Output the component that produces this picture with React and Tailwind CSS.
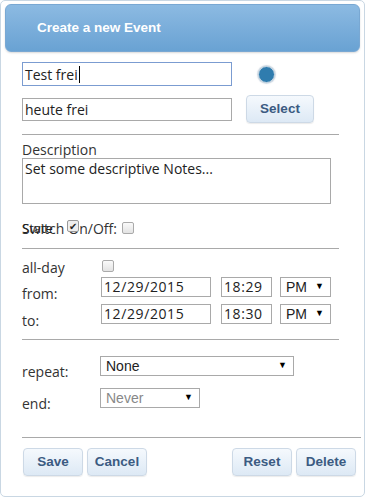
import React from "react";

const btn =
  "h-[28px] rounded-[4px] border border-[#cdd9e6] bg-gradient-to-b from-[#f5f9fd] to-[#dde9f5] text-[13.5px] font-bold text-[#3b5b82] shadow-[0_1px_1px_rgba(0,0,0,0.08)] [font-family:'Liberation_Sans',sans-serif] flex items-center justify-center";

const inp =
  "border border-[#a9a9a9] bg-white text-[14px] text-[#222] px-[2px] outline-none [font-family:'Open_Sans',sans-serif]";

function Sel({ w, value, gray }) {
  return (
    <div
      className={`h-[20px] border border-[#a9a9a9] bg-white flex items-center justify-between pl-[5px] pr-[6px] text-[14px] [font-family:'Liberation_Sans',sans-serif] ${gray ? "text-[#888]" : "text-[#222]"}`}
      style={{ width: w }}
    >
      <span>{value}</span>
      <span className="text-[9px] text-black">▼</span>
    </div>
  );
}

export default function App() {
  return (
    <div className="w-[368px] h-[500px] bg-white [font-family:'Open_Sans',sans-serif] text-[#333]">
      <div className="w-[365px] h-[497px] border border-[#c9d7e3] rounded-[5px] pt-[3px] px-[4px] flex flex-col">
        <div className="h-[48px] rounded-[6px] border border-[#79a8d3] bg-gradient-to-b from-[#8cbae2] to-[#69a2d3] flex items-center pl-[31px] shadow-[0_1px_2px_rgba(0,0,0,0.15)]">
          <span className="text-white font-bold text-[13.5px] [font-family:'Liberation_Sans',sans-serif]">
            Create a new Event
          </span>
        </div>

        <div className="pl-[17px] flex flex-col">
          <div className="mt-[10px] flex items-center">
            <div className="w-[210px] h-[24px] border border-[#7b9cd1] flex items-center px-[2px] text-[14px] text-[#222]">
              Test frei<span className="inline-block w-[1px] h-[17px] bg-black ml-[1px]" />
            </div>
            <div className="ml-[26px] w-[17px] h-[17px] rounded-full bg-[#2f7cae] border border-[#c8d8e4] shadow-[0_0_1px_1px_rgba(160,180,200,0.5)]" />
          </div>

          <div className="mt-[9px] flex items-center">
            <div className={`${inp} w-[210px] h-[23px] flex items-center`}>heute frei</div>
            <div className={`${btn} ml-[14px] w-[68px]`}>Select</div>
          </div>

          <div className="mt-[11px] w-[317px] h-[1px] bg-[#a9a9a9]" />

          <div className="mt-[6px] text-[14px] leading-[17px] text-[#333]">Description</div>
          <div className={`${inp} w-[309px] h-[46px] leading-[18px] pt-[1px]`}>Set some descriptive Notes...</div>

          <div className="mt-[16px] flex items-center text-[14px] h-[16px] relative">
            <span className="absolute left-0 top-[-1px] text-[13px] text-[#222]">State</span>
            <span>Switch</span>
            <span className="ml-[4px] relative">
              On/Off:
              <span className="absolute left-[-1px] top-[2px] w-[12px] h-[12px] rounded-[2px] border border-[#999] bg-[#eee] flex items-center justify-center text-[10px] leading-none text-[#222]">✔</span>
            </span>
            <span className="ml-[5px] w-[12px] h-[12px] rounded-[2px] border border-[#aaa] bg-gradient-to-b from-[#fafafa] to-[#e3e3e3]" />
          </div>

          <div className="mt-[12px] w-[317px] h-[1px] bg-[#a9a9a9]" />

          <div className="mt-[10px] flex items-center h-[13px]">
            <span className="w-[80px] text-[14px] pt-[3px]">all-day</span>
            <span className="w-[12px] h-[12px] rounded-[2px] border border-[#aaa] bg-gradient-to-b from-[#fafafa] to-[#e3e3e3]" />
          </div>

          <div className="mt-[5px] flex items-start h-[20px]">
            <span className="w-[79px] text-[14px] pt-[6px]">from:</span>
            <div className={`${inp} w-[110px] h-[20px] leading-[18px] tracking-[0.6px]`}>12/29/2015</div>
            <div className={`${inp} ml-[10px] w-[51px] h-[20px] leading-[18px] tracking-[0.6px]`}>18:29</div>
            <div className="ml-[8px]"><Sel w="51px" value="PM" /></div>
          </div>

          <div className="mt-[7px] flex items-start h-[20px]">
            <span className="w-[79px] text-[14px] pt-[6px]">to:</span>
            <div className={`${inp} w-[110px] h-[20px] leading-[18px] tracking-[0.6px]`}>12/29/2015</div>
            <div className={`${inp} ml-[10px] w-[51px] h-[20px] leading-[18px] tracking-[0.6px]`}>18:30</div>
            <div className="ml-[8px]"><Sel w="51px" value="PM" /></div>
          </div>

          <div className="mt-[15px] w-[317px] h-[1px] bg-[#a9a9a9]" />

          <div className="mt-[16px] flex items-start h-[20px]">
            <span className="w-[78px] text-[14px] pt-[5px]">repeat:</span>
            <Sel w="194px" value="None" />
          </div>

          <div className="mt-[12px] flex items-start h-[20px]">
            <span className="w-[78px] text-[14px] pt-[5px]">end:</span>
            <Sel w="100px" value="Never" gray />
          </div>

          <div className="mt-[29px] w-[339px] h-[1px] bg-[#a9a9a9]" />

          <div className="mt-[10px] flex items-center">
            <div className={`${btn} ml-[1px] w-[60px]`}>Save</div>
            <div className={`${btn} ml-[4px] w-[60px]`}>Cancel</div>
            <div className={`${btn} ml-[85px] w-[60px]`}>Reset</div>
            <div className={`${btn} ml-[4px] w-[60px]`}>Delete</div>
          </div>
        </div>
      </div>
    </div>
  );
}
